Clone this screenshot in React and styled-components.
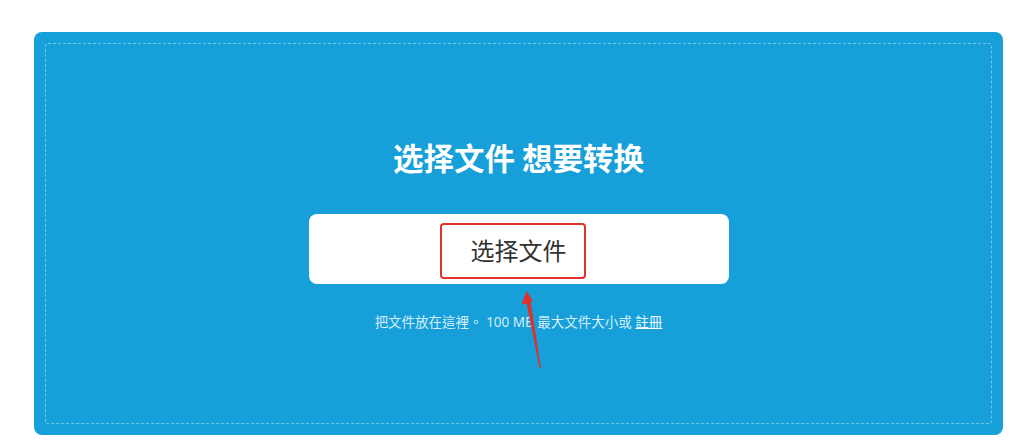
import styled, { createGlobalStyle } from 'styled-components';

const GlobalStyle = createGlobalStyle`
  html, body {
    margin: 0;
    padding: 0;
    background: #ffffff;
  }
  body {
    font-family: "Noto Sans", "Noto Sans CJK SC", sans-serif;
  }
`;

const Page = styled.div`
  padding: 32px 11px 9px 34px;
`;

const Panel = styled.section`
  position: relative;
  box-sizing: border-box;
  width: 969px;
  height: 403px;
  padding: 11px;
  background: #169fd8;
  border-radius: 8px;
`;

const DropZone = styled.div`
  box-sizing: border-box;
  height: 100%;
  border: 1px dashed #74c9ee;
  border-radius: 3px;
  display: flex;
  flex-direction: column;
  align-items: center;
  padding-top: 92px;
`;

const Title = styled.h2`
  margin: 0;
  font-family: "Noto Sans CJK SC", sans-serif;
  font-size: 30.5px;
  line-height: 42px;
  font-weight: 700;
  color: #ffffff;
`;

const PickButton = styled.button`
  position: relative;
  margin-top: 36px;
  width: 420px;
  height: 70px;
  border: none;
  border-radius: 8px;
  background: #ffffff;
  font-family: "Noto Sans CJK SC", sans-serif;
  font-size: 24px;
  color: #333333;
  display: flex;
  align-items: center;
  justify-content: center;
  padding: 0;
  cursor: pointer;
`;

const Highlight = styled.span`
  position: absolute;
  left: 131px;
  top: 9px;
  width: 146px;
  height: 56px;
  box-sizing: border-box;
  border: 2.5px solid #e3312b;
  border-radius: 4px;
`;

const Hint = styled.p`
  margin: 29px 0 0;
  font-size: 13.5px;
  line-height: 18px;
  color: #d4effb;
  font-family: "Noto Sans", "Noto Sans CJK TC", sans-serif;
`;

const HintLink = styled.a`
  color: #f2fbff;
  text-decoration: underline;
`;

const Arrow = styled.svg`
  position: absolute;
  left: 481px;
  top: 253px;
  overflow: visible;
`;

export default function App() {
  return (
    <>
      <GlobalStyle />
      <Page>
        <Panel>
          <DropZone>
            <Title>选择文件 想要转换</Title>
            <PickButton>
              选择文件
              <Highlight />
            </PickButton>
            <Hint>
              把文件放在這裡。 100 MB 最大文件大小或 <HintLink href="#">註冊</HintLink>
            </Hint>
          </DropZone>
          <Arrow width="35" height="90" viewBox="0 0 35 90">
            <polygon
              points="11.5,6 18.2,16.5 15.6,17 25.9,83 24.5,83 11.6,18.5 6.6,19.5"
              fill="#e0302a"
            />
          </Arrow>
        </Panel>
      </Page>
    </>
  );
}
